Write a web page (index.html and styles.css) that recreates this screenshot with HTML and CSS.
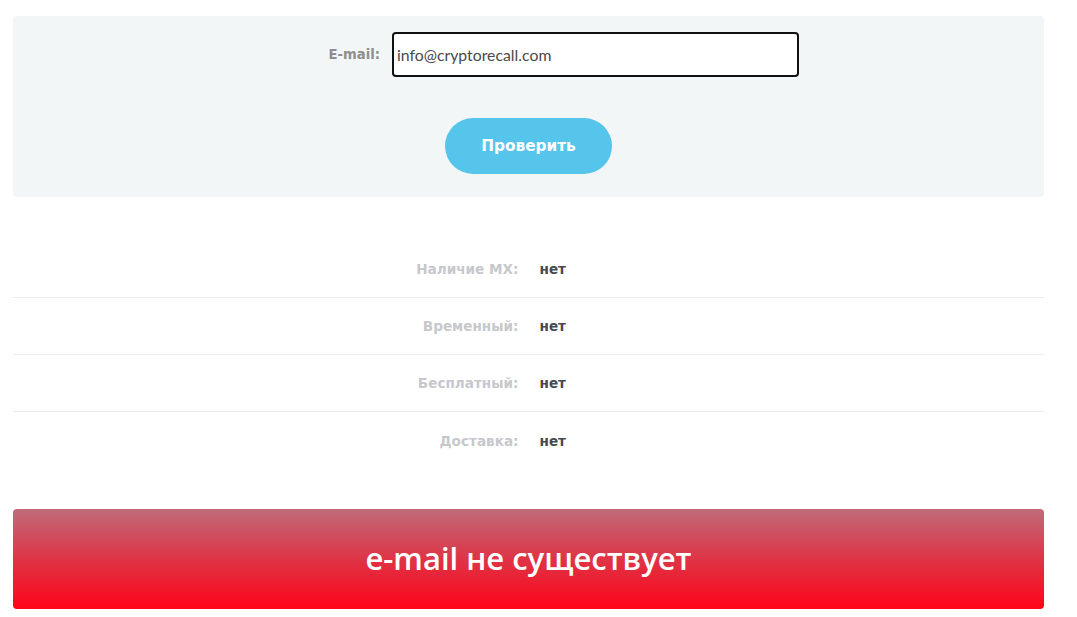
FILE: index.html
```html
<!DOCTYPE html>
<html lang="ru">
<head>
<meta charset="utf-8">
<title>Проверка e-mail</title>
<link rel="stylesheet" href="styles.css">
</head>
<body>
<div class="page">
  <form class="panel">
    <div class="field">
      <label class="field-label" for="email">E-mail:</label>
      <input class="field-input" id="email" type="text" value="info@cryptorecall.com">
    </div>
    <div class="actions">
      <button class="btn" type="button">Проверить</button>
    </div>
  </form>

  <div class="results">
    <div class="row"><div class="key">Наличие MX:</div><div class="val">нет</div></div>
    <div class="row"><div class="key">Временный:</div><div class="val">нет</div></div>
    <div class="row"><div class="key">Бесплатный:</div><div class="val">нет</div></div>
    <div class="row"><div class="key">Доставка:</div><div class="val">нет</div></div>
  </div>

  <div class="verdict">e-mail не существует</div>
</div>
</body>
</html>
```
FILE: styles.css
```css
html, body {
  margin: 0;
  padding: 0;
  background: #ffffff;
}
.page {
  margin: 16px 33px 0 13px;
  font-family: "DejaVu Sans", "Noto Sans", sans-serif;
}
.panel {
  background: #f3f6f7;
  border-radius: 4px;
  padding: 16px 0 23px;
  display: flex;
  flex-direction: column;
  gap: 41px;
}
.field {
  display: grid;
  grid-template-columns: 367px 407px;
  column-gap: 12px;
  align-items: center;
}
.field-label {
  justify-self: end;
  font-size: 13.2px;
  font-weight: bold;
  color: #8e8e8e;
}
.field-input {
  box-sizing: border-box;
  height: 45px;
  border: 2px solid #111;
  border-radius: 4px;
  background: #fff;
  padding: 0 3px;
  font-family: "Lato", sans-serif;
  font-size: 15.8px;
  color: #4a4a4a;
  outline: none;
}
.actions {
  display: flex;
  justify-content: center;
}
.btn {
  width: 167px;
  height: 56px;
  border: none;
  border-radius: 28px;
  background: #56c5ec;
  color: #fff;
  font-family: "DejaVu Sans", sans-serif;
  font-weight: bold;
  font-size: 15.3px;
  padding: 0;
  cursor: pointer;
}
.results {
  margin-top: 44px;
}
.row {
  display: grid;
  grid-template-columns: 1fr 1fr;
  height: 57px;
  align-items: center;
  border-bottom: 1px solid #ececec;
  box-sizing: border-box;
  font-size: 13.6px;
  font-weight: bold;
}
.row:last-child {
  border-bottom: none;
}
.key {
  text-align: right;
  padding-right: 10px;
  color: #c6c8cc;
}
.val {
  padding-left: 11px;
  color: #454a50;
}
.verdict {
  margin-top: 40px;
  height: 100px;
  border-radius: 4px;
  background: linear-gradient(to bottom, #c06b79 0%, #de3446 50%, #ff0419 100%);
  color: #fff;
  display: flex;
  align-items: center;
  justify-content: center;
  font-family: "Open Sans", sans-serif;
  font-weight: 600;
  font-size: 31px;
  padding-bottom: 3px;
  box-sizing: border-box;
}
```
